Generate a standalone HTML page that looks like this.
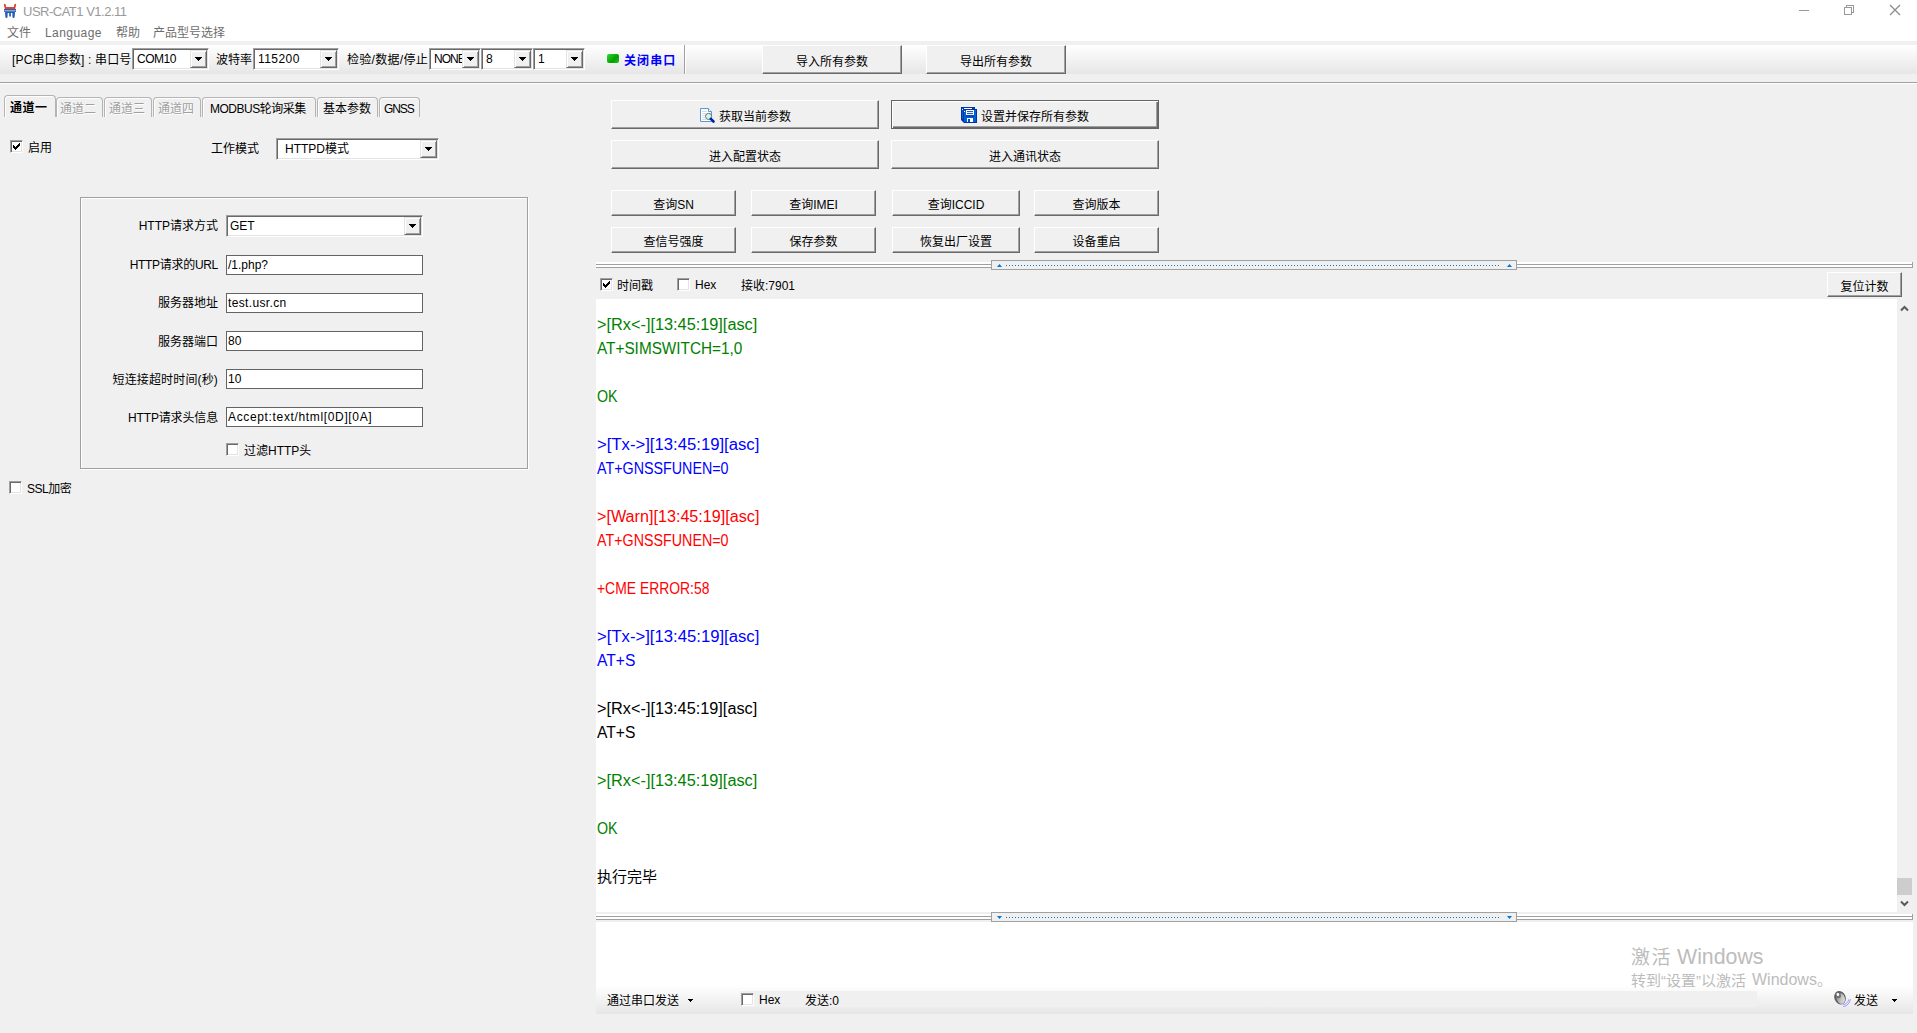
<!DOCTYPE html>
<html lang="zh-CN">
<head>
<meta charset="utf-8">
<title>USR-CAT1 V1.2.11</title>
<style>
*{box-sizing:border-box;margin:0;padding:0}
html,body{width:1917px;height:1033px;overflow:hidden;background:#f0f0f0}
body{position:relative;font-family:"Liberation Sans","Noto Sans CJK SC",sans-serif;font-size:12px;color:#000;line-height:1}
.a{position:absolute;white-space:nowrap}
.t{position:absolute;white-space:nowrap;height:17px;line-height:16px;font-size:12px;padding-top:1px}
.r{text-align:right}
/* classic sunken combo */
.cb{position:absolute;background:#fff;border:1px solid;border-color:#a0a0a0 #fff #fff #a0a0a0;box-shadow:inset 1px 1px 0 #696969,inset -1px -1px 0 #e3e3e3}
.cb .v{position:absolute;left:4px;top:2px;height:16px;line-height:16px;font-size:12px;white-space:nowrap}
.cb .ar{position:absolute;right:1px;top:1px;bottom:1px;width:17px;background:#f0f0f0;border:1px solid;border-color:#e3e3e3 #696969 #696969 #e3e3e3;box-shadow:inset 1px 1px 0 #fff,inset -1px -1px 0 #a0a0a0}
.cb .ar:after{content:"";position:absolute;left:4px;top:6px;width:7px;height:4px;background:linear-gradient(#000,#000) 0 0/7px 1px no-repeat,linear-gradient(#000,#000) 1px 1px/5px 1px no-repeat,linear-gradient(#000,#000) 2px 2px/3px 1px no-repeat,linear-gradient(#000,#000) 3px 3px/1px 1px no-repeat}
/* classic raised button */
.bt{position:absolute;background:#f0f0f0;border:1px solid;border-color:#fff #696969 #696969 #fff;box-shadow:inset -1px -1px 0 #a0a0a0;text-align:center;font-size:12px;white-space:nowrap}
.bt span{position:absolute;left:0;right:0;text-align:center}
/* flat input */
.in{position:absolute;background:#fff;border:1px solid #646464;font-size:12px;white-space:nowrap;padding-left:1px;line-height:18px}
/* checkbox */
.ck{position:absolute;width:13px;height:13px;background:#fff;border:1px solid;border-color:#a0a0a0 #fff #fff #a0a0a0;box-shadow:inset 1px 1px 0 #696969,inset -1px -1px 0 #e3e3e3}
.ck svg{position:absolute;left:2px;top:2px}

.tab{position:absolute;top:97px;height:20px;text-align:left;border:1px solid #b4b4b4;border-bottom:0;border-radius:4px 4px 0 0;box-shadow:inset 1px 1px 0 #fff;font-size:12px;line-height:16px;padding-top:3px;white-space:nowrap}
.tab.dis{color:#a0a0a0;text-shadow:1px 1px 0 #fff}
.gb{position:absolute;border:1px solid #a0a0a0;box-shadow:1px 1px 0 #fff,inset 1px 1px 0 #fff}

.sp{position:absolute;left:596px;width:1317px;height:6px;background:#fff;border-right:1px solid #a0a0a0}
.sp i{position:absolute;left:0;right:0;height:1px;background:#a0a0a0}
.hd{position:absolute;left:991px;width:526px;height:10px;background:#f0f0f0;border:1px solid #a0a0a0}
.dots{position:absolute;left:14px;top:4px;width:493px;height:1px;background:repeating-linear-gradient(90deg,#0078d7 0,#0078d7 1px,transparent 1px,transparent 3px)}
.log{position:absolute;left:597px;font-size:16px;line-height:24px;height:24px;white-space:nowrap}
.log span{display:inline-block;transform-origin:0 50%}
.g{color:#008000}.b{color:#0000ff}.rd{color:#ff0000}
.wm{color:#bcbcbc}
</style>
</head>
<body>
<!-- title bar + menu -->
<div class="a" style="left:0;top:0;width:1917px;height:41px;background:#fff"></div>
<div class="a" id="ttl" style="left:23px;top:4px;font-size:13px;letter-spacing:-.5px;line-height:16px;color:#999">USR-CAT1 V1.2.11</div>
<div class="t" style="left:7px;top:24px;color:#6d6d6d">文件</div>
<div class="t" style="left:45px;top:24px;letter-spacing:.45px;color:#6d6d6d">Language</div>
<div class="t" style="left:116px;top:24px;color:#6d6d6d">帮助</div>
<div class="t" style="left:153px;top:24px;color:#6d6d6d">产品型号选择</div>

<!-- window controls -->
<svg class="a" style="left:1790px;top:0" width="120" height="22" viewBox="0 0 120 22" shape-rendering="crispEdges">
<rect x="9" y="10" width="10" height="1" fill="#999"/>
<path d="M56.5 7V5.5H63.5V12.5H62" fill="none" stroke="#999"/>
<rect x="54.5" y="7.5" width="7" height="7" fill="none" stroke="#999"/>
<path d="M100 5L110 15M110 5L100 15" stroke="#8c8c8c" stroke-width="1.25" shape-rendering="geometricPrecision" fill="none"/>
</svg>

<!-- title icon -->
<svg class="a" style="left:0;top:0" width="22" height="22" viewBox="0 0 22 22">
<path d="M3.8 4.6C4.3 3.4 5.4 3.5 5.7 4.8L6.1 6.9H13.9L14.3 4.8C14.6 3.5 15.8 3.4 16.2 4.6L15.2 9H4.8Z" fill="#d8452c"/>
<path d="M4 8.9H16V12H15L14.6 17.2C14.5 18.2 12.6 18.2 12.5 17.2L12.3 13H10.9V16C10.9 16.9 9.2 16.9 9.2 16V13H7.7L7.5 17.2C7.4 18.2 5.5 18.2 5.4 17.2L5 12H4Z" fill="#255cb4"/>
<rect x="4.3" y="10.2" width="11.4" height="1.1" fill="#9bb8e4"/>
</svg>
<!-- toolbar -->
<div class="a" style="left:0;top:45px;width:1917px;height:29px;background:linear-gradient(#fff,#e6e6e6)"></div>
<div class="a" style="left:0;top:82px;width:1917px;height:1px;background:#a0a0a0"></div>
<div class="a" style="left:0;top:83px;width:1917px;height:1px;background:#fff"></div>

<div class="t" style="left:12px;top:51px;letter-spacing:.15px">[PC串口参数] : 串口号</div>
<div class="cb" style="left:132px;top:48px;width:77px;height:22px"><span class="v" style="letter-spacing:-.5px">COM10</span><i class="ar"></i></div>
<div class="t" style="left:216px;top:51px">波特率</div>
<div class="cb" style="left:253px;top:48px;width:86px;height:22px"><span class="v" style="letter-spacing:.45px">115200</span><i class="ar"></i></div>
<div class="t" style="left:347px;top:51px;letter-spacing:.3px">检验/数据/停止</div>
<div class="cb" style="left:429px;top:48px;width:52px;height:22px;overflow:hidden"><span class="v" style="letter-spacing:-1px">NONE</span><i class="ar"></i></div>
<div class="cb" style="left:481px;top:48px;width:52px;height:22px"><span class="v">8</span><i class="ar"></i></div>
<div class="cb" style="left:533px;top:48px;width:52px;height:22px"><span class="v">1</span><i class="ar"></i></div>
<div class="a" style="left:607px;top:54px;width:12px;height:9px;border-radius:2px;background:linear-gradient(135deg,#35d835,#00a000 60%,#22c522)"></div>
<div class="t" style="left:624px;top:52px;color:#0000ff;font-weight:bold;letter-spacing:1.1px">关闭串口</div>
<div class="a" style="left:684px;top:45px;width:1px;height:29px;background:#a0a0a0"></div>
<div class="a" style="left:685px;top:45px;width:1px;height:29px;background:#fff"></div>
<div class="bt" style="left:762px;top:45px;width:140px;height:29px"><span style="top:8px;line-height:16px">导入所有参数</span></div>
<div class="bt" style="left:926px;top:45px;width:140px;height:29px"><span style="top:8px;line-height:16px">导出所有参数</span></div>

<!-- tabs -->
<div class="tab" style="left:4px;top:95px;width:52px;height:22px;font-weight:bold;padding-top:4px;padding-left:5px;letter-spacing:.5px">通道一</div>
<div class="tab dis" style="left:56px;width:47px;padding-left:3px">通道二</div>
<div class="tab dis" style="left:104px;width:48px;padding-left:4px">通道三</div>
<div class="tab dis" style="left:153px;width:48px;padding-left:4px">通道四</div>
<div class="tab" style="left:202px;width:114px;padding-left:7px;letter-spacing:-.5px">MODBUS轮询采集</div>
<div class="tab" style="left:317px;width:61px;padding-left:5px">基本参数</div>
<div class="tab" style="left:379px;width:41px;padding-left:4px;letter-spacing:-1.1px">GNSS</div>
<!-- channel form -->
<div class="ck" style="left:10px;top:140px"><svg width="7" height="7" viewBox="0 0 7 7" shape-rendering="crispEdges"><path d="M0 2h1v3h-1zM1 3h1v3h-1zM2 4h1v3h-1zM3 3h1v3h-1zM4 2h1v3h-1zM5 1h1v3h-1zM6 0h1v3h-1z" fill="#000"/></svg></div>
<div class="t" style="left:28px;top:139px">启用</div>
<div class="t" style="left:211px;top:140px">工作模式</div>
<div class="cb" style="left:276px;top:138px;width:163px;height:22px"><span class="v" style="left:8px">HTTPD模式</span><i class="ar"></i></div>
<div class="gb" style="left:80px;top:197px;width:448px;height:272px"></div>
<div class="t r" style="left:100px;width:118px;top:217px">HTTP请求方式</div>
<div class="cb" style="left:226px;top:215px;width:197px;height:22px"><span class="v" style="left:3px">GET</span><i class="ar"></i></div>
<div class="t r" style="left:100px;width:118px;top:256px;letter-spacing:-.3px">HTTP请求的URL</div>
<div class="in" style="left:226px;top:255px;width:197px;height:20px">/1.php?</div>
<div class="t r" style="left:100px;width:118px;top:294px">服务器地址</div>
<div class="in" style="left:226px;top:293px;width:197px;height:20px;letter-spacing:.35px">test.usr.cn</div>
<div class="t r" style="left:100px;width:118px;top:333px">服务器端口</div>
<div class="in" style="left:226px;top:331px;width:197px;height:20px">80</div>
<div class="t r" style="left:100px;width:118px;top:371px;letter-spacing:.15px">短连接超时时间(秒)</div>
<div class="in" style="left:226px;top:369px;width:197px;height:20px">10</div>
<div class="t r" style="left:100px;width:118px;top:409px;letter-spacing:-.15px">HTTP请求头信息</div>
<div class="in" style="left:226px;top:407px;width:197px;height:20px;letter-spacing:.65px">Accept:text/html[0D][0A]</div>
<div class="ck" style="left:226px;top:443px"></div>
<div class="t" style="left:244px;top:442px">过滤HTTP头</div>
<div class="ck" style="left:9px;top:481px"></div>
<div class="t" style="left:27px;top:480px;letter-spacing:-.5px">SSL加密</div>

<!-- right panel buttons -->
<div class="bt" style="left:611px;top:100px;width:268px;height:29px"><span style="top:8px;line-height:16px;left:107px;text-align:left">获取当前参数</span></div>
<div class="bt" style="left:891px;top:100px;width:268px;height:29px;border-color:#646464;box-shadow:inset 1px 1px 0 #fff,inset -1px -1px 0 #696969,inset -2px -2px 0 #a0a0a0"><span style="top:8px;line-height:16px;left:89px;text-align:left">设置并保存所有参数</span></div>
<div class="bt" style="left:611px;top:140px;width:268px;height:29px"><span style="top:8px;line-height:16px">进入配置状态</span></div>
<div class="bt" style="left:891px;top:140px;width:268px;height:29px"><span style="top:8px;line-height:16px">进入通讯状态</span></div>
<div class="bt" style="left:611px;top:190px;width:125px;height:26px"><span style="top:6px;line-height:16px">查询SN</span></div>
<div class="bt" style="left:751px;top:190px;width:125px;height:26px"><span style="top:6px;line-height:16px">查询IMEI</span></div>
<div class="bt" style="left:892px;top:190px;width:128px;height:26px"><span style="top:6px;line-height:16px">查询ICCID</span></div>
<div class="bt" style="left:1034px;top:190px;width:125px;height:26px"><span style="top:6px;line-height:16px">查询版本</span></div>
<div class="bt" style="left:611px;top:227px;width:125px;height:26px"><span style="top:6px;line-height:16px">查信号强度</span></div>
<div class="bt" style="left:751px;top:227px;width:125px;height:26px"><span style="top:6px;line-height:16px">保存参数</span></div>
<div class="bt" style="left:892px;top:227px;width:128px;height:26px"><span style="top:6px;line-height:16px">恢复出厂设置</span></div>
<div class="bt" style="left:1034px;top:227px;width:125px;height:26px"><span style="top:6px;line-height:16px">设备重启</span></div>
<!-- upper splitter -->
<div class="sp" style="top:262px"><i style="top:2px"></i><i style="top:5px"></i></div>
<div class="hd" style="top:260px"><div class="dots"></div>
<svg class="a" style="left:5px;top:3px" width="5" height="3" viewBox="0 0 5 3"><path d="M0 3h5L2.5 0z" fill="#0078d7"/></svg>
<svg class="a" style="left:515px;top:3px" width="5" height="3" viewBox="0 0 5 3"><path d="M0 3h5L2.5 0z" fill="#0078d7"/></svg></div>
<!-- receive options -->
<div class="ck" style="left:600px;top:278px"><svg width="7" height="7" viewBox="0 0 7 7" shape-rendering="crispEdges"><path d="M0 2h1v3h-1zM1 3h1v3h-1zM2 4h1v3h-1zM3 3h1v3h-1zM4 2h1v3h-1zM5 1h1v3h-1zM6 0h1v3h-1z" fill="#000"/></svg></div>
<div class="t" style="left:617px;top:277px">时间戳</div>
<div class="ck" style="left:677px;top:278px"></div>
<div class="t" style="left:695px;top:276px">Hex</div>
<div class="t" style="left:741px;top:277px">接收:7901</div>
<div class="bt" style="left:1827px;top:272px;width:75px;height:25px"><span style="top:6px;line-height:16px">复位计数</span></div>
<!-- log -->
<div class="a" style="left:596px;top:299px;width:1301px;height:613px;background:#fff"></div>
<div class="a" style="left:1897px;top:299px;width:17px;height:613px;background:#f0f0f0"></div>
<div class="a" style="left:1897px;top:878px;width:15px;height:17px;background:#cdcdcd"></div>
<svg class="a" style="left:1900px;top:304px" width="9" height="8" viewBox="0 0 9 8"><path d="M1 6.5L4.5 3L8 6.5" fill="none" stroke="#5a5a5a" stroke-width="2"/></svg>
<svg class="a" style="left:1900px;top:900px" width="9" height="8" viewBox="0 0 9 8"><path d="M1 1.5L4.5 5L8 1.5" fill="none" stroke="#5a5a5a" stroke-width="2"/></svg>
<div class="log g" style="top:313px"><span style="transform:scaleX(1.018)">&gt;[Rx&lt;-][13:45:19][asc]</span></div>
<div class="log g" style="top:337px"><span style="transform:scaleX(0.958)">AT+SIMSWITCH=1,0</span></div>
<div class="log g" style="top:385px"><span style="transform:scaleX(0.89)">OK</span></div>
<div class="log b" style="top:433px"><span style="transform:scaleX(1.043)">&gt;[Tx-&gt;][13:45:19][asc]</span></div>
<div class="log b" style="top:457px"><span style="transform:scaleX(0.893)">AT+GNSSFUNEN=0</span></div>
<div class="log rd" style="top:505px"><span style="transform:scaleX(1.01)">&gt;[Warn][13:45:19][asc]</span></div>
<div class="log rd" style="top:529px"><span style="transform:scaleX(0.893)">AT+GNSSFUNEN=0</span></div>
<div class="log rd" style="top:577px"><span style="transform:scaleX(0.869)">+CME ERROR:58</span></div>
<div class="log b" style="top:625px"><span style="transform:scaleX(1.043)">&gt;[Tx-&gt;][13:45:19][asc]</span></div>
<div class="log b" style="top:649px"><span style="transform:scaleX(0.977)">AT+S</span></div>
<div class="log" style="top:697px"><span style="transform:scaleX(1.018)">&gt;[Rx&lt;-][13:45:19][asc]</span></div>
<div class="log" style="top:721px"><span style="transform:scaleX(0.977)">AT+S</span></div>
<div class="log g" style="top:769px"><span style="transform:scaleX(1.018)">&gt;[Rx&lt;-][13:45:19][asc]</span></div>
<div class="log g" style="top:817px"><span style="transform:scaleX(0.89)">OK</span></div>
<div class="log" style="top:865px"><span style="font-size:15px">执行完毕</span></div>
<!-- lower splitter -->
<div class="sp" style="top:914px"><i style="top:2px"></i><i style="top:5px"></i></div>
<div class="hd" style="top:912px"><div class="dots"></div>
<svg class="a" style="left:5px;top:3px" width="5" height="3" viewBox="0 0 5 3"><path d="M0 0h5L2.5 3z" fill="#0078d7"/></svg>
<svg class="a" style="left:515px;top:3px" width="5" height="3" viewBox="0 0 5 3"><path d="M0 0h5L2.5 3z" fill="#0078d7"/></svg></div>
<!-- send area -->
<div class="a" style="left:596px;top:922px;width:1317px;height:63px;background:#fff"></div>
<div class="a" style="left:596px;top:985px;width:1317px;height:29px;background:linear-gradient(#fff,#e6e6e6)"></div>
<div class="a" style="left:740px;top:991px;width:1017px;height:16px;background:#f0f0f0"></div>
<div class="t" style="left:607px;top:992px">通过串口发送</div>
<svg class="a" style="left:688px;top:999px" width="5" height="3" viewBox="0 0 5 3" shape-rendering="crispEdges"><path d="M0 0h5v1h-5zM1 1h3v1h-3zM2 2h1v1h-1z" fill="#000"/></svg>
<div class="ck" style="left:741px;top:993px"></div>
<div class="t" style="left:759px;top:991px">Hex</div>
<div class="t" style="left:805px;top:992px">发送:0</div>
<div class="t" style="left:1854px;top:992px">发送</div>
<svg class="a" style="left:1892px;top:999px" width="5" height="3" viewBox="0 0 5 3" shape-rendering="crispEdges"><path d="M0 0h5v1h-5zM1 1h3v1h-3zM2 2h1v1h-1z" fill="#000"/></svg>
<!-- doc search icon -->
<svg class="a" style="left:699px;top:107px" width="17" height="17" viewBox="0 0 17 17">
<path d="M1.5 1.5H9.5L12.5 4.5V14.5H1.5Z" fill="#fff" stroke="#5b9bd5"/>
<path d="M9.5 1.5V4.5H12.5" fill="#fff" stroke="#5b9bd5"/>
<path d="M3 4.5H8M3 6.5H7M3 8.5H6M3 10.5H6M3 12.5H7" stroke="#dcdcdc"/>
<circle cx="9.6" cy="9.4" r="3.1" fill="#c9f7f7" stroke="#707070"/>
<path d="M11.8 11.8L14.5 14.5" stroke="#0022a8" stroke-width="2.6" stroke-linecap="round"/>
</svg>
<!-- save all icon -->
<svg class="a" style="left:960px;top:106px" width="18" height="18" viewBox="0 0 18 18">
<path d="M1 1H15V3H17V17H4L1 14Z" fill="#0033a6"/>
<rect x="2" y="2" width="1" height="11" fill="#0060d0"/>
<rect x="4" y="4" width="12" height="12" fill="#0060d0"/>
<rect x="4" y="2" width="8" height="1" fill="#fff"/>
<rect x="2" y="3" width="1" height="1" fill="#fff"/><rect x="4" y="5" width="1" height="1" fill="#fff"/>
<rect x="6" y="4" width="8" height="5" fill="#fff"/>
<rect x="7" y="5.2" width="6" height=".9" fill="#0033a6"/><rect x="7" y="7.2" width="6" height=".9" fill="#0033a6"/>
<rect x="6" y="9.5" width="8" height="1" fill="#0033a6"/>
<rect x="7" y="12" width="6" height="4" fill="#fffbf0"/>
<rect x="8" y="13" width="2" height="3" fill="#0050c0"/>
</svg>
<!-- speaker icon -->
<svg class="a" style="left:1833px;top:990px" width="19" height="19" viewBox="0 0 19 19">
<defs><linearGradient id="spk" x1="0" y1="0" x2="1" y2="1"><stop offset="0" stop-color="#7c7c7c"/><stop offset=".55" stop-color="#c4c4c4"/><stop offset="1" stop-color="#ececec"/></linearGradient></defs>
<path d="M10.2 16.6C14.2 16 16.8 13.2 17.4 9.2M9.6 14.9C12.8 14.5 15.2 12.3 15.8 9.4" fill="none" stroke="#9a9aff" stroke-width="1"/>
<ellipse cx="7" cy="7.7" rx="5.6" ry="6.9" transform="rotate(-22 7 7.7)" fill="#5e5e5e"/>
<ellipse cx="7.7" cy="8.5" rx="4.1" ry="5.5" transform="rotate(-22 7.7 8.5)" fill="url(#spk)"/>
<ellipse cx="5.3" cy="5.3" rx="2.5" ry="3" transform="rotate(-22 5.3 5.3)" fill="#70707c"/>
<ellipse cx="4.9" cy="4.5" rx="1.3" ry="1.6" transform="rotate(-22 4.9 4.5)" fill="#fff"/>
</svg>
<!-- activation watermark -->
<div class="a wm" style="left:1631px;top:946px;font-size:19px;line-height:24px;letter-spacing:1.6px">激活</div>
<div class="a wm" style="left:1677px;top:944px;font-size:21.33px;line-height:26px">Windows</div>
<div class="a wm" style="left:1631px;top:971px;font-size:15px;line-height:20px">转到“设置”以激活</div>
<div class="a wm" style="left:1752px;top:970px;font-size:16px;line-height:20px">Windows<span style="font-size:15px">。</span></div>
</body>
</html>
